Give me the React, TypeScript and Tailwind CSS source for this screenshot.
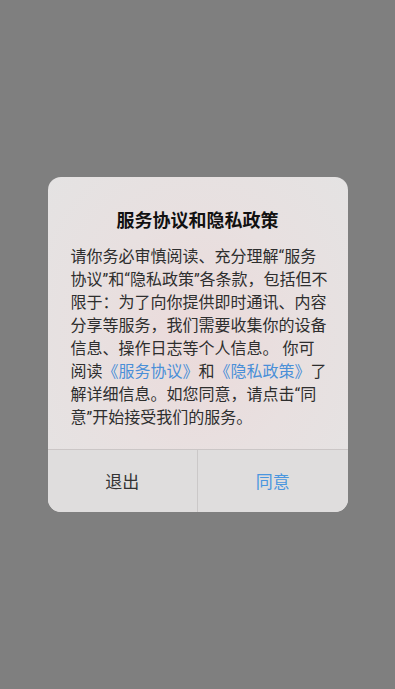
const lines: React.ReactNode[] = [
  "请你务必审慎阅读、充分理解“服务",
  "协议”和“隐私政策”各条款，包括但不",
  "限于：为了向你提供即时通讯、内容",
  "分享等服务，我们需要收集你的设备",
  "信息、操作日志等个人信息。 你可",
  <>
    阅读<span className="text-[#4a8fd8]">《服务协议》</span>和
    <span className="text-[#4a8fd8]">《隐私政策》</span>了
  </>,
  "解详细信息。如您同意，请点击“同",
  "意”开始接受我们的服务。",
]

export default function App() {
  return (
    <div className="h-screen w-full bg-[#7f7f7f] flex items-center justify-center font-['Roboto','Noto_Sans_CJK_SC',sans-serif]">
      <div className="w-[300px] rounded-[13px] overflow-hidden bg-[radial-gradient(ellipse_at_50%_48%,#ebdada_0%,#e8e0e0_50%,#e4e3e3_100%)]">
        <div className="pt-[31px] pb-[20px] px-[23px]">
          <h1 className="text-center text-[18px] leading-[26px] font-bold text-[#111]">服务协议和隐私政策</h1>
          <div className="mt-[11px] text-[16px] leading-[23px] text-[#2e2e2e]">
            {lines.map((l, i) => (
              <div key={i} className="whitespace-nowrap">{l}</div>
            ))}
          </div>
        </div>
        <div className="flex h-[63px] border-t border-[#cbc6c6] bg-[#dfdddd]">
          <button className="flex-1 pt-[3px] text-[17px] text-[#333]">退出</button>
          <div className="w-px bg-[#cbc8c8]" />
          <button className="flex-1 pt-[3px] text-[17px] text-[#4a96df]">同意</button>
        </div>
      </div>
    </div>
  )
}
